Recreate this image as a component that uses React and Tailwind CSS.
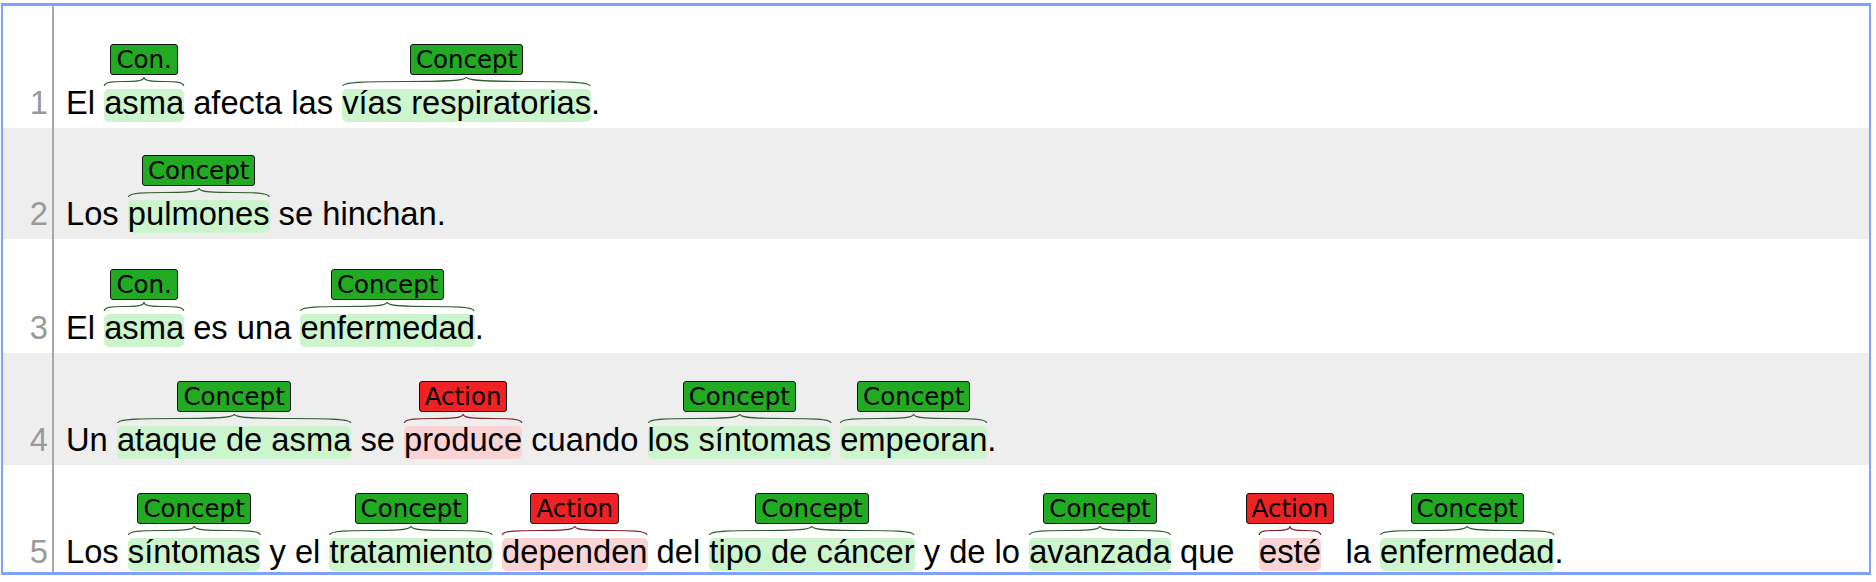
import React from "react";

const KINDS = {
  c: {
    label: "bg-[#22aa22]",
    hl: "bg-[#cdf5cd]",
    brace: "#2e5e2e",
  },
  a: {
    label: "bg-[#ee2222]",
    hl: "bg-[#fad4d4]",
    brace: "#7e2424",
  },
};

const ROWS = [
  {
    n: 1,
    h: "h-[122px]",
    bg: "bg-white",
    pb: "pb-[6px]",
    tokens: [
      "El ",
      { t: "asma", l: "Con.", k: "c" },
      " afecta las ",
      { t: "vías respiratorias", l: "Concept", k: "c" },
      ".",
    ],
  },
  {
    n: 2,
    h: "h-[111px]",
    bg: "bg-[#eeeeee]",
    pb: "pb-[6px]",
    tokens: ["Los ", { t: "pulmones", l: "Concept", k: "c" }, " se hinchan."],
  },
  {
    n: 3,
    h: "h-[114px]",
    bg: "bg-white",
    pb: "pb-[6px]",
    tokens: [
      "El ",
      { t: "asma", l: "Con.", k: "c" },
      " es una ",
      { t: "enfermedad", l: "Concept", k: "c" },
      ".",
    ],
  },
  {
    n: 4,
    h: "h-[112px]",
    bg: "bg-[#eeeeee]",
    pb: "pb-[6px]",
    tokens: [
      "Un ",
      { t: "ataque de asma", l: "Concept", k: "c" },
      " se ",
      { t: "produce", l: "Action", k: "a" },
      " cuando ",
      { t: "los síntomas", l: "Concept", k: "c" },
      " ",
      { t: "empeoran", l: "Concept", k: "c" },
      ".",
    ],
  },
  {
    n: 5,
    h: "h-[107px]",
    bg: "bg-white",
    pb: "pb-[1px]",
    tokens: [
      "Los ",
      { t: "síntomas", l: "Concept", k: "c" },
      " y el ",
      { t: "tratamiento", l: "Concept", k: "c" },
      " ",
      { t: "dependen", l: "Action", k: "a" },
      " del ",
      { t: "tipo de cáncer", l: "Concept", k: "c" },
      " y de lo ",
      { t: "avanzada", l: "Concept", k: "c" },
      " que ",
      { t: "esté", l: "Action", k: "a", wide: true },
      " la ",
      { t: "enfermedad", l: "Concept", k: "c" },
      ".",
    ],
  },
];

function Brace({ color }) {
  return (
    <div className="relative h-[9px]">
      <svg
        className="absolute inset-0 w-full h-full overflow-visible"
        viewBox="0 0 100 10"
        preserveAspectRatio="none"
      >
        <path
          d="M0.3,10 C0.3,0 50,10 50,0 C50,10 99.7,0 99.7,10"
          fill="none"
          stroke={color}
          strokeWidth="1.2"
          vectorEffect="non-scaling-stroke"
        />
      </svg>
    </div>
  );
}

function Span({ tok }) {
  const k = KINDS[tok.k];
  return (
    <span className={`flex flex-col items-center ${tok.wide ? "mx-[2px]" : ""}`}>
      <span
        className={`h-[31px] px-[5px] leading-[29px] border border-[#111] rounded-[3px] text-[24.5px] text-black whitespace-pre ${k.label}`}
        style={{ fontFamily: '"DejaVu Sans", sans-serif' }}
      >
        {tok.l}
      </span>
      <span className="flex flex-col mt-[2px]">
        <Brace color={k.brace} />
        <span
          className={`mt-[3px] h-[33px] leading-[27.5px] rounded-[5px] whitespace-pre ${k.hl}`}
        >
          {tok.t}
        </span>
      </span>
    </span>
  );
}

function Row({ row }) {
  return (
    <div className={`flex ${row.h} ${row.bg}`}>
      <div
        className={`w-[49px] shrink-0 flex items-end justify-end pr-[4px] ${row.pb} text-[#9a9a9a]`}
      >
        <span className="h-[33px] leading-[27.5px]">{row.n}</span>
      </div>
      <div className="w-[2px] shrink-0 bg-[#a8a8a8]" />
      <div className={`flex items-end pl-[12px] ${row.pb} text-black`}>
        {row.tokens.map((tok, i) =>
          typeof tok === "string" ? (
            <span key={i} className="h-[33px] leading-[27.5px] whitespace-pre">
              {tok}
            </span>
          ) : (
            <Span key={i} tok={tok} />
          )
        )}
      </div>
    </div>
  );
}

export default function App() {
  return (
    <div className="w-[1876px] h-[582px] bg-white pt-[3px] pl-[1px]">
      <div
        className="w-[1870px] h-[572px] border-x-2 border-y-[3px] border-[#7fa2ff] overflow-hidden text-[32.7px]"
        style={{ fontFamily: '"Liberation Sans", Arial, sans-serif' }}
      >
        {ROWS.map((r) => (
          <Row key={r.n} row={r} />
        ))}
      </div>
    </div>
  );
}
